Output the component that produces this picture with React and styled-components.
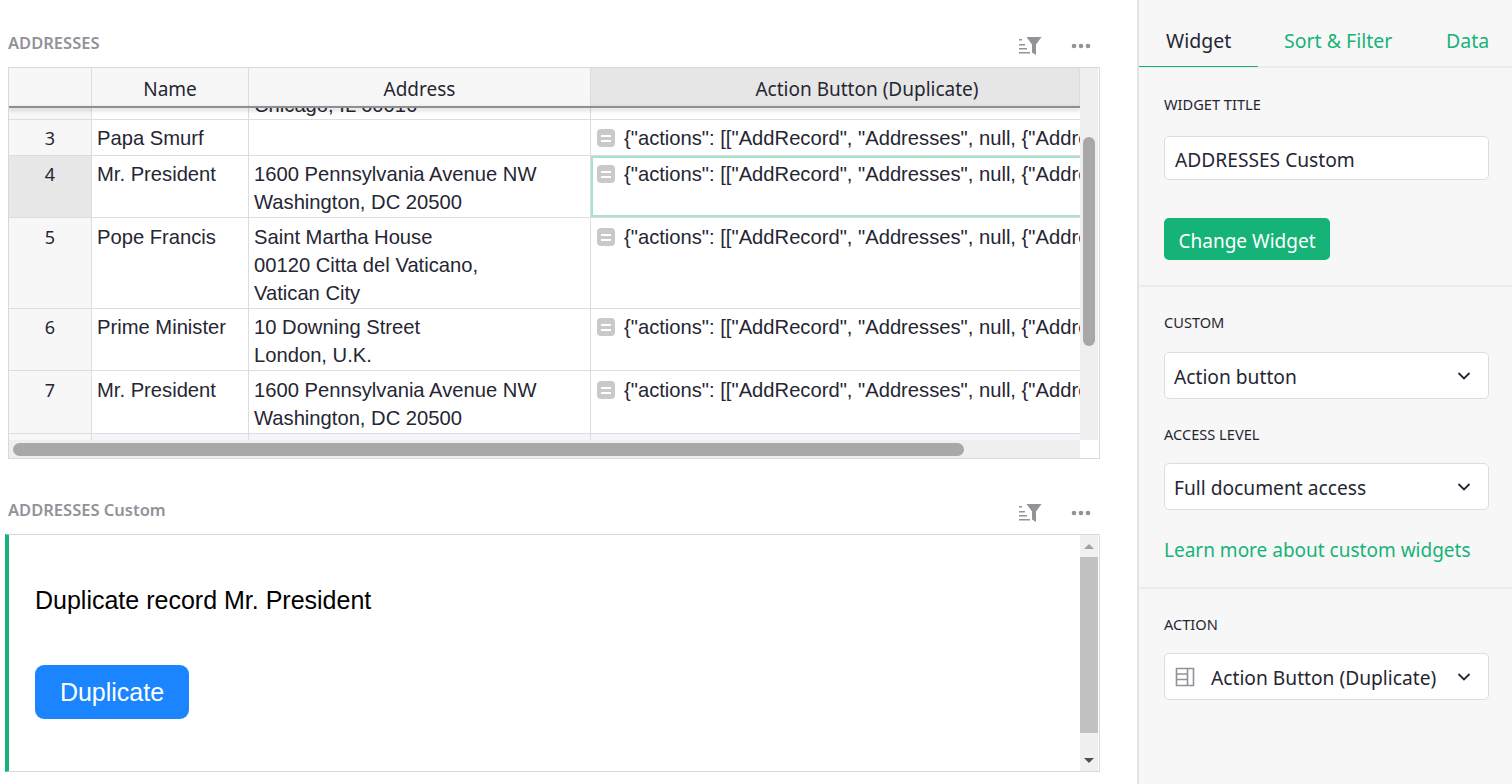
import React from 'react'
import styled, { createGlobalStyle } from 'styled-components'

const uiFont = `"Noto Sans", "Open Sans", sans-serif`
const cellFont = `"Liberation Sans", Arial, sans-serif`
const green = '#16b378'

const GlobalStyle = createGlobalStyle`
    html, body {
        margin: 0;
        padding: 0;
        background: #ffffff;
    }
    * {
        box-sizing: border-box;
    }
`

const Page = styled.div`
    display: flex;
    width: 1512px;
    height: 784px;
    overflow: hidden;
    font-family: ${uiFont};
    color: #262633;
`
const Main = styled.div`
    width: 1137px;
    flex: none;
    display: flex;
    flex-direction: column;
    padding-left: 8px;
`
const SectionHeader = styled.div`
    height: ${p => p.$height}px;
    width: 1092px;
    display: flex;
    align-items: flex-end;
    justify-content: space-between;
    padding-bottom: 14px;
`
const SectionTitle = styled.div`
    font-size: 16.5px;
    line-height: 20px;
    font-weight: 600;
    color: #929299;
`
const HeaderIcons = styled.div`
    display: flex;
    align-items: center;
    gap: 29px;
    padding-right: 9px;
    margin-bottom: -3px;
`
const TableFrame = styled.div`
    width: 1092px;
    height: 392px;
    border: 1px solid #d9d9d9;
    display: grid;
    grid-template-columns: 1071px 19px;
    grid-template-rows: 372px 18px;
`
const GridArea = styled.div`
    overflow: hidden;
    font-family: ${cellFont};
    font-size: 20.2px;
    color: #262633;
`
const HeaderRow = styled.div`
    position: relative;
    z-index: 2;
    display: grid;
    grid-template-columns: 83px 157px 342px 489px;
    height: 39px;
    background: #f7f7f7;
    font-family: ${uiFont};
    font-size: 19px;
    &::after {
        content: '';
        position: absolute;
        left: 0;
        right: 0;
        top: 38px;
        height: 2px;
        background: #8f8f8f;
        box-shadow: 0 2px 4px rgba(0, 0, 0, 0.25);
    }
`
const HeaderCell = styled.div`
    display: flex;
    align-items: center;
    justify-content: center;
    padding-top: 3px;
    padding-left: ${p => (p.$active ? 64 : 0)}px;
    border-right: 1px solid #dddddd;
    background: ${p => (p.$active ? '#e6e6e6' : 'transparent')};
`
const Row = styled.div`
    display: grid;
    grid-template-columns: 83px 157px 342px 520px;
    height: ${p => p.$height}px;
    border-bottom: 1px solid #dddddd;
    line-height: 28px;
    overflow: hidden;
`
const RowNumber = styled.div`
    background: ${p => (p.$active ? '#e7e7e7' : '#f7f7f7')};
    border-right: 1px solid #dddddd;
    text-align: center;
    font-family: ${uiFont};
    font-size: 18px;
    padding-top: ${p => p.$pad ?? 4}px;
`
const Cell = styled.div`
    position: relative;
    background: ${p => (p.$faint ? '#f4f5fd' : '#ffffff')};
    border-right: 1px solid #dddddd;
    padding: ${p => p.$pad ?? 4}px 5px 0;
    white-space: pre-line;
    overflow: hidden;
`
const ClippedText = styled.div`
    margin-top: -20px;
`
const FormulaCell = styled(Cell)`
    display: flex;
    align-items: flex-start;
    gap: 9px;
    white-space: nowrap;
    border-right: none;
    padding-left: 6px;
    ${p => p.$selected && `
        box-shadow: inset 0 0 0 2px #a5e4cb;
    `}
`
const FormulaBadge = styled.span`
    width: 18px;
    height: 18px;
    flex: none;
    margin-top: 5px;
    border-radius: 4px;
    background: #c9c9c9;
    display: flex;
    flex-direction: column;
    align-items: center;
    justify-content: center;
    gap: 3px;
    &::before, &::after {
        content: '';
        width: 10px;
        height: 2px;
        background: #ffffff;
    }
`
const VTrack = styled.div`
    background: #efefef;
    padding: 69px 3px 0 3px;
    margin-right: 1px;
`
const VThumb = styled.div`
    height: 209px;
    border-radius: 6px;
    background: #a8a8a8;
`
const HTrack = styled.div`
    background: #efefef;
    padding: 3px 116px 2px 4px;
`
const HThumb = styled.div`
    height: 13px;
    border-radius: 7px;
    background: #a8a8a8;
`
const CustomFrame = styled.div`
    width: 1095px;
    height: 238px;
    margin-left: -3px;
    border: 1px solid #d9d9d9;
    border-left: 4px solid ${green};
    background: #ffffff;
    display: flex;
`
const CustomBody = styled.div`
    flex: 1;
    padding: 0 0 0 26px;
    font-family: ${cellFont};
    color: #000000;
`
const CustomText = styled.div`
    margin-top: 50px;
    font-size: 25px;
    line-height: 30px;
`
const DuplicateButton = styled.button`
    display: block;
    width: 154px;
    height: 54px;
    margin-top: 50px;
    border: none;
    border-radius: 9px;
    background: #1a85ff;
    color: #ffffff;
    font-family: ${cellFont};
    font-size: 25px;
`
const ArrowTrack = styled.div`
    width: 18px;
    flex: none;
    margin-right: 1px;
    background: #f0f0f0;
    display: flex;
    flex-direction: column;
    align-items: center;
`
const ArrowBox = styled.div`
    height: 22px;
    flex: none;
    display: flex;
    align-items: center;
    justify-content: center;
    font-size: 0;
`
const Triangle = styled.span`
    width: 0;
    height: 0;
    border-left: 5px solid transparent;
    border-right: 5px solid transparent;
    ${p => (p.$up ? 'border-bottom: 5px solid #a0a0a0;' : 'border-top: 5px solid #505050;')}
`
const ScrollThumb = styled.div`
    width: 100%;
    height: 176px;
    background: #c1c1c1;
`
const Spacer = styled.div`
    flex: 1;
`

const Panel = styled.div`
    width: 375px;
    flex: none;
    height: 784px;
    background: #f7f7f7;
    border-left: 2px solid #e4e4e4;
    display: flex;
    flex-direction: column;
`
const Tabs = styled.div`
    display: flex;
    height: 68px;
    border-bottom: 2px solid #ececec;
    font-size: 19.5px;
`
const Tab = styled.div`
    width: ${p => p.$width}px;
    height: 67px;
    padding: 26px 0 0 ${p => p.$left}px;
    line-height: 30px;
    color: ${p => (p.$active ? '#262633' : green)};
    border-bottom: ${p => (p.$active ? `1px solid ${green}` : 'none')};
`
const PanelSection = styled.div`
    height: ${p => p.$height}px;
    padding: ${p => p.$top}px 23px 0 25px;
    border-bottom: ${p => (p.$last ? 'none' : '2px solid #ececec')};
    flex: none;
`
const Label = styled.div`
    font-size: 14.6px;
    height: 20px;
    line-height: 18px;
    margin-top: ${p => p.$top || 0}px;
    color: #262633;
`
const InputBox = styled.div`
    height: ${p => p.$height}px;
    margin-top: ${p => p.$top}px;
    background: #ffffff;
    border: 1px solid #dddddd;
    border-radius: 5px;
    display: flex;
    align-items: center;
    padding: ${p => p.$pad}px 16px 0 10px;
    font-size: 19.2px;
    white-space: nowrap;
`
const SelectText = styled.span`
    flex: 1;
    margin-left: ${p => p.$left}px;
`
const ChangeButton = styled.button`
    display: block;
    width: 166px;
    height: 42px;
    margin-top: 38px;
    border: none;
    border-radius: 5px;
    background: ${green};
    color: #ffffff;
    font-family: ${uiFont};
    font-size: 19px;
    padding: 4px 0 0;
`
const LearnLink = styled.a`
    display: block;
    margin-top: 26px;
    font-size: 19px;
    line-height: 28px;
    color: ${green};
`

const FilterIcon = () => (
    <svg width="24" height="20" viewBox="0 0 24 20">
        <rect x="1" y="3" width="3" height="1.5" fill="#929299" />
        <rect x="1" y="8" width="6" height="1.5" fill="#929299" />
        <rect x="1" y="12" width="8" height="1.5" fill="#929299" />
        <rect x="1" y="16" width="11" height="1.5" fill="#929299" />
        <path d="M8.5 1 H23.5 L18 8.5 V19 L14 16.5 V8.5 Z" fill="#929299" />
    </svg>
)
const DotsIcon = () => (
    <svg width="20" height="6" viewBox="0 0 20 6">
        <circle cx="3" cy="3" r="2.3" fill="#929299" />
        <circle cx="10" cy="3" r="2.3" fill="#929299" />
        <circle cx="17" cy="3" r="2.3" fill="#929299" />
    </svg>
)
const Chevron = () => (
    <svg width="16" height="10" viewBox="0 0 16 10">
        <path d="M2.5 2 L8 7.5 L13.5 2" fill="none" stroke="#262633" strokeWidth="1.8" />
    </svg>
)
const TableIcon = () => (
    <svg width="20" height="20" viewBox="0 0 20 20">
        <path d="M1.5 1.5 H18.5 V18.5 H1.5 Z M1.5 7 H12.5 M1.5 12.5 H12.5 M12.5 1.5 V18.5" fill="none" stroke="#929299" strokeWidth="1.6" />
    </svg>
)

const ACTION = '{"actions": [["AddRecord", "Addresses", null, {"Address": "1600 Pennsylvania"}]]}'

const rows = [
    { n: 3, name: 'Papa Smurf', address: '', height: 36, pad: 4 },
    { n: 4, name: 'Mr. President', address: '1600 Pennsylvania Avenue NW\nWashington, DC 20500', height: 62, pad: 4, active: true },
    { n: 5, name: 'Pope Francis', address: 'Saint Martha House\n00120 Citta del Vaticano,\nVatican City', height: 91, pad: 5 },
    { n: 6, name: 'Prime Minister', address: '10 Downing Street\nLondon, U.K.', height: 62, pad: 4 },
    { n: 7, name: 'Mr. President', address: '1600 Pennsylvania Avenue NW\nWashington, DC 20500', height: 63, pad: 5 },
]

function Select({ children, icon, top }) {
    return (
        <InputBox $height={47} $top={top} $pad={1}>
            {icon}
            <SelectText $left={icon ? 16 : -1}>{children}</SelectText>
            <Chevron />
        </InputBox>
    )
}

export default function App() {
    return (
        <Page>
            <GlobalStyle />
            <Main>
                <SectionHeader $height={67}>
                    <SectionTitle>ADDRESSES</SectionTitle>
                    <HeaderIcons>
                        <FilterIcon />
                        <DotsIcon />
                    </HeaderIcons>
                </SectionHeader>
                <TableFrame>
                    <GridArea>
                        <HeaderRow>
                            <HeaderCell />
                            <HeaderCell>Name</HeaderCell>
                            <HeaderCell>Address</HeaderCell>
                            <HeaderCell $active>Action Button (Duplicate)</HeaderCell>
                        </HeaderRow>
                        <Row $height={13}>
                            <RowNumber />
                            <Cell />
                            <Cell><ClippedText>Chicago, IL 60016</ClippedText></Cell>
                            <FormulaCell />
                        </Row>
                        {rows.map(r => (
                            <Row key={r.n} $height={r.height}>
                                <RowNumber $active={r.active} $pad={r.pad}>{r.n}</RowNumber>
                                <Cell $pad={r.pad}>{r.name}</Cell>
                                <Cell $pad={r.pad}>{r.address}</Cell>
                                <FormulaCell $selected={r.active} $pad={r.pad}>
                                    <FormulaBadge />
                                    {ACTION}
                                </FormulaCell>
                            </Row>
                        ))}
                        <Row $height={8}>
                            <RowNumber />
                            <Cell $faint />
                            <Cell $faint />
                            <FormulaCell $faint />
                        </Row>
                    </GridArea>
                    <VTrack><VThumb /></VTrack>
                    <HTrack><HThumb /></HTrack>
                </TableFrame>
                <SectionHeader $height={75}>
                    <SectionTitle>ADDRESSES Custom</SectionTitle>
                    <HeaderIcons>
                        <FilterIcon />
                        <DotsIcon />
                    </HeaderIcons>
                </SectionHeader>
                <CustomFrame>
                    <CustomBody>
                        <CustomText>Duplicate record Mr. President</CustomText>
                        <DuplicateButton>Duplicate</DuplicateButton>
                    </CustomBody>
                    <ArrowTrack>
                        <ArrowBox><Triangle $up /></ArrowBox>
                        <ScrollThumb />
                        <Spacer />
                        <ArrowBox><Triangle /></ArrowBox>
                    </ArrowTrack>
                </CustomFrame>
            </Main>
            <Panel>
                <Tabs>
                    <Tab $active $width={119} $left={27}>Widget</Tab>
                    <Tab $width={168} $left={26}>Sort &amp; Filter</Tab>
                    <Tab $width={86} $left={20}>Data</Tab>
                </Tabs>
                <PanelSection $height={219} $top={27}>
                    <Label>WIDGET TITLE</Label>
                    <InputBox $height={44} $top={21} $pad={3}>ADDRESSES Custom</InputBox>
                    <ChangeButton>Change Widget</ChangeButton>
                </PanelSection>
                <PanelSection $height={302} $top={26}>
                    <Label>CUSTOM</Label>
                    <Select top={19}>Action button</Select>
                    <Label $top={26}>ACCESS LEVEL</Label>
                    <Select top={18}>Full document access</Select>
                    <LearnLink>Learn more about custom widgets</LearnLink>
                </PanelSection>
                <PanelSection $height={195} $top={26} $last>
                    <Label>ACTION</Label>
                    <Select top={18} icon={<TableIcon />}>Action Button (Duplicate)</Select>
                </PanelSection>
            </Panel>
        </Page>
    )
}
